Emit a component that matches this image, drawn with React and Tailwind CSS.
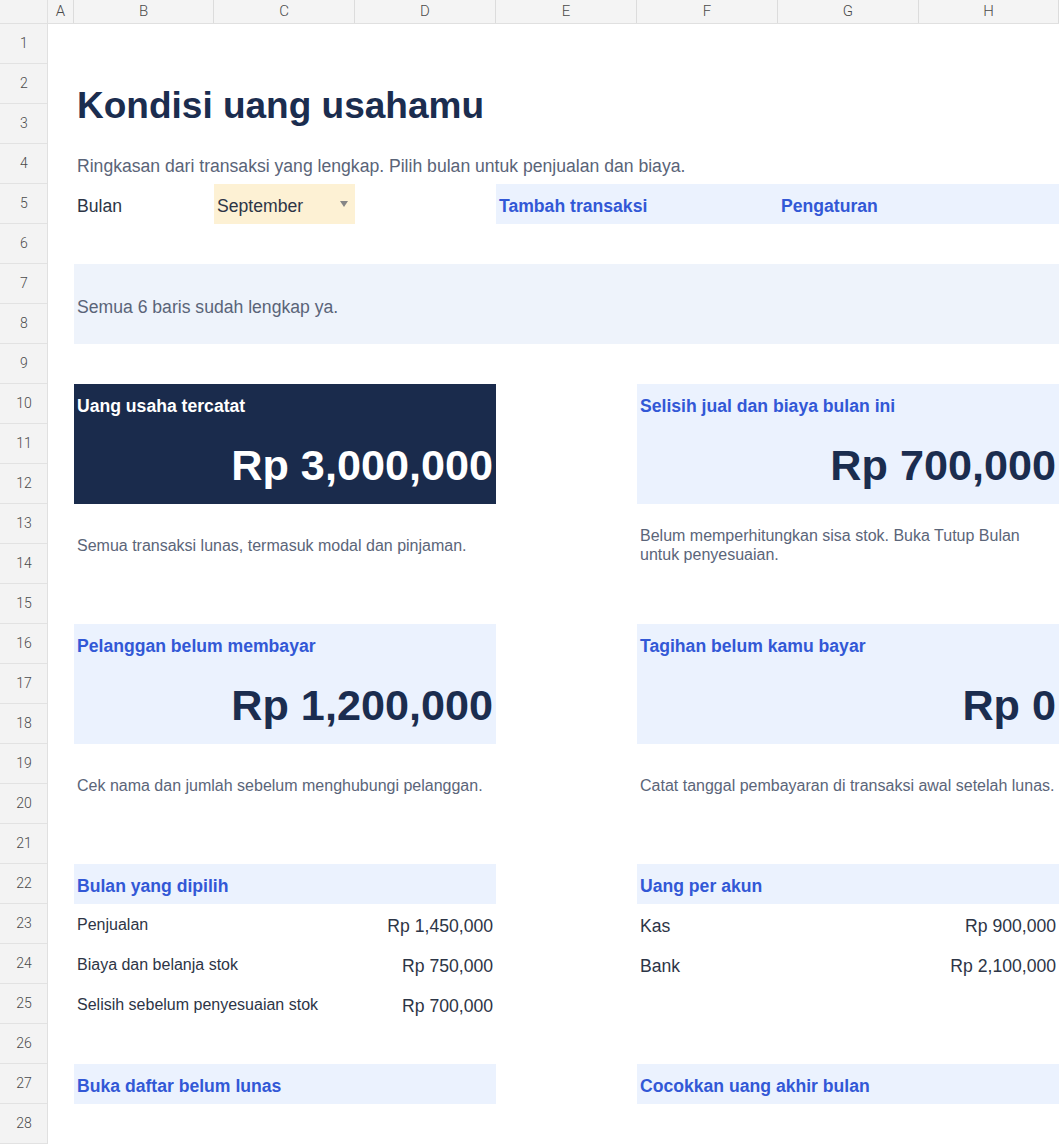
import React from "react";

const FONT = { fontFamily: '"Liberation Sans", Arial, sans-serif' };

const colHeads = [
  { label: "A", className: "w-[26px]" },
  { label: "B", className: "w-[140px]" },
  { label: "C", className: "w-[141px]" },
  { label: "D", className: "w-[141px]" },
  { label: "E", className: "w-[141px]" },
  { label: "F", className: "w-[141px]" },
  { label: "G", className: "w-[141px]" },
  { label: "H", className: "w-[140px]" },
];

const rows = Array.from({ length: 28 }, (_, i) => i + 1);

function Card({ dark, title, value, className }) {
  return (
    <div
      className={
        "grid grid-rows-[40px_80px] " +
        (dark ? "bg-[#1a2b4c] " : "bg-[#ebf2fe] ") +
        className
      }
    >
      <div
        className={
          "flex items-center px-[3px] pt-[4px] text-[17.6px] font-bold " +
          (dark ? "text-white" : "text-[#3258d6]")
        }
      >
        {title}
      </div>
      <div
        className={
          "flex items-center justify-end px-[3px] pt-[3px] text-[43.2px] font-bold leading-none " +
          (dark ? "text-white" : "text-[#1b2d4f]")
        }
      >
        {value}
      </div>
    </div>
  );
}

function Note({ children, className }) {
  return (
    <div
      className={
        "flex items-center px-[3px] pt-[2px] text-[16px] leading-[19px] text-[#5b6579] " +
        className
      }
    >
      <div>{children}</div>
    </div>
  );
}

function BlueHead({ children, className }) {
  return (
    <div
      className={
        "flex items-center bg-[#ebf2fe] px-[3px] pt-[4px] text-[17.6px] font-bold text-[#3258d6] " +
        className
      }
    >
      {children}
    </div>
  );
}

function Line({ label, value, big, className }) {
  return (
    <div
      className={
        "flex items-center justify-between px-[3px] text-[#2d3546] " + className
      }
    >
      <span className={big ? "pt-[4px] text-[17.6px]" : "pt-[2px] text-[16px]"}>{label}</span>
      <span className="pt-[4px] text-[17.6px]">{value}</span>
    </div>
  );
}

export default function App() {
  return (
    <div className="flex w-[1059px] h-[1144px] overflow-hidden bg-white" style={FONT}>
      {/* row header column */}
      <div className="flex flex-col w-[48px] shrink-0 bg-[#f3f3f3] border-r border-[#e0e0e0]">
        <div className="h-[24px] shrink-0 border-b border-[#e0e0e0]" />
        {rows.map((r) => (
          <div
            key={r}
            className="h-[40px] shrink-0 flex items-center justify-center pl-[1px] border-b border-[#e2e2e2] text-[14px] font-light text-[#4a4a4a]"
            style={{ fontFamily: "Roboto, sans-serif" }}
          >
            {r}
          </div>
        ))}
      </div>

      <div className="flex flex-col">
        {/* column headers */}
        <div className="flex h-[24px] shrink-0 bg-[#f4f4f4] border-b border-[#e0e0e0]">
          {colHeads.map((c) => (
            <div
              key={c.label}
              className={
                "flex items-center justify-center border-r border-[#dcdcdc] text-[15px] font-light text-[#4a4a4a] " +
                c.className
              }
              style={{ fontFamily: "Roboto, sans-serif" }}
            >
              {c.label}
            </div>
          ))}
        </div>

        {/* sheet body */}
        <div className="grid grid-cols-[26px_140px_141px_141px_141px_141px_141px_140px] grid-rows-[repeat(28,40px)]">
          <div className="col-start-2 col-span-5 row-start-2 row-span-2 flex items-center px-[3px] pt-[3px] text-[37px] font-bold text-[#1b2d4f] whitespace-nowrap">
            Kondisi uang usahamu
          </div>

          <div className="col-start-2 col-span-7 row-start-4 flex items-center px-[3px] pt-[4px] text-[17.6px] text-[#5a6478] whitespace-nowrap">
            Ringkasan dari transaksi yang lengkap. Pilih bulan untuk penjualan dan biaya.
          </div>

          <div className="col-start-2 row-start-5 flex items-center px-[3px] pt-[4px] text-[17.6px] text-[#2d3546]">
            Bulan
          </div>
          <div className="col-start-3 row-start-5 flex items-center justify-between bg-[#fdf1d4] pl-[3px] pr-[7px] text-[17.6px] text-[#2d3546]">
            <span className="pt-[4px]">September</span>
            <svg width="8" height="6" viewBox="0 0 8 6" className="mb-[1px]">
              <path d="M0 0 H8 L4 6 Z" fill="#868686" />
            </svg>
          </div>
          <div className="col-start-5 col-span-4 row-start-5 grid grid-cols-[282px_1fr] bg-[#ebf2fe] text-[17.6px] font-bold text-[#3258d6]">
            <div className="flex items-center px-[3px] pt-[4px]">Tambah transaksi</div>
            <div className="flex items-center px-[3px] pt-[4px]">Pengaturan</div>
          </div>

          <div className="col-start-2 col-span-7 row-start-7 row-span-2 flex items-center bg-[#eef3fb] px-[3px] pt-[6px] text-[17.6px] text-[#5a6478]">
            Semua 6 baris sudah lengkap ya.
          </div>

          <Card dark title="Uang usaha tercatat" value="Rp 3,000,000" className="col-start-2 col-span-3 row-start-10 row-span-3" />
          <Card title="Selisih jual dan biaya bulan ini" value="Rp 700,000" className="col-start-6 col-span-3 row-start-10 row-span-3" />
          <Note className="col-start-2 col-span-3 row-start-13 row-span-2">
            Semua transaksi lunas, termasuk modal dan pinjaman.
          </Note>
          <Note className="col-start-6 col-span-3 row-start-13 row-span-2">
            Belum memperhitungkan sisa stok. Buka Tutup Bulan untuk penyesuaian.
          </Note>

          <Card title="Pelanggan belum membayar" value="Rp 1,200,000" className="col-start-2 col-span-3 row-start-16 row-span-3" />
          <Card title="Tagihan belum kamu bayar" value="Rp 0" className="col-start-6 col-span-3 row-start-16 row-span-3" />
          <Note className="col-start-2 col-span-3 row-start-19 row-span-2">
            Cek nama dan jumlah sebelum menghubungi pelanggan.
          </Note>
          <Note className="col-start-6 col-span-3 row-start-19 row-span-2 whitespace-nowrap">
            Catat tanggal pembayaran di transaksi awal setelah lunas.
          </Note>

          <BlueHead className="col-start-2 col-span-3 row-start-22">Bulan yang dipilih</BlueHead>
          <BlueHead className="col-start-6 col-span-3 row-start-22">Uang per akun</BlueHead>
          <Line label="Penjualan" value="Rp 1,450,000" className="col-start-2 col-span-3 row-start-23" />
          <Line label="Biaya dan belanja stok" value="Rp 750,000" className="col-start-2 col-span-3 row-start-24" />
          <Line label="Selisih sebelum penyesuaian stok" value="Rp 700,000" className="col-start-2 col-span-3 row-start-25" />
          <Line big label="Kas" value="Rp 900,000" className="col-start-6 col-span-3 row-start-23" />
          <Line big label="Bank" value="Rp 2,100,000" className="col-start-6 col-span-3 row-start-24" />

          <BlueHead className="col-start-2 col-span-3 row-start-27">Buka daftar belum lunas</BlueHead>
          <BlueHead className="col-start-6 col-span-3 row-start-27">Cocokkan uang akhir bulan</BlueHead>
        </div>
      </div>
    </div>
  );
}
